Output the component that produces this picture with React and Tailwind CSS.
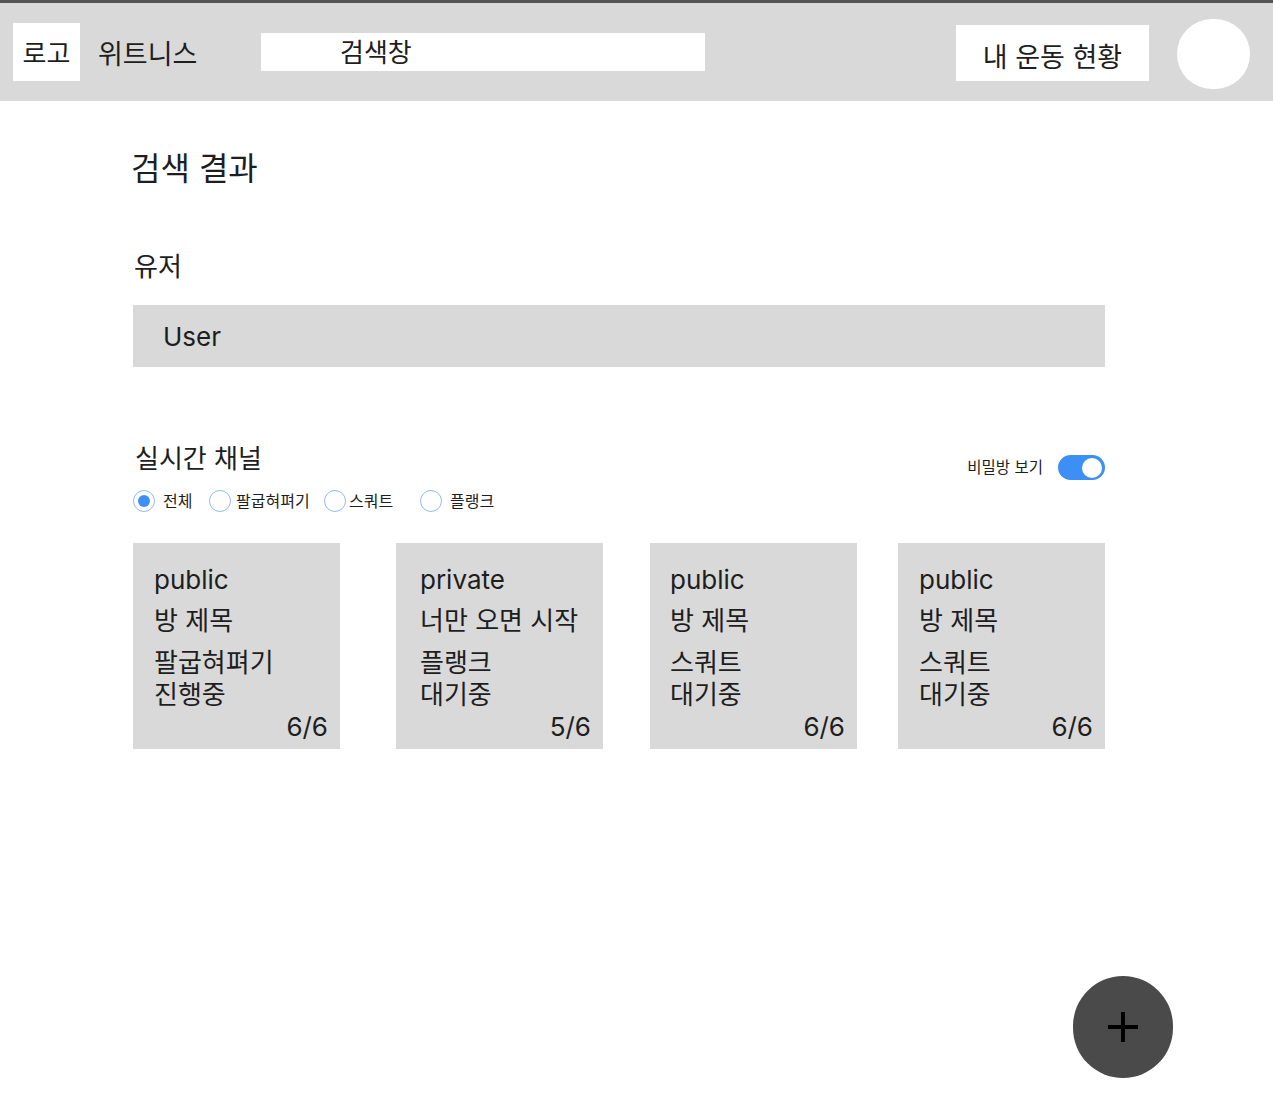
import React from "react";

const font = { fontFamily: '"Inter", "Noto Sans CJK KR", sans-serif' };

const rooms = [
  { type: "public", title: "방 제목", exercise: "팔굽혀펴기", status: "진행중", count: "6/6", ml: "", pl: "pl-[21px]" },
  { type: "private", title: "너만 오면 시작", exercise: "플랭크", status: "대기중", count: "5/6", ml: "ml-[56px]", pl: "pl-[24px]" },
  { type: "public", title: "방 제목", exercise: "스쿼트", status: "대기중", count: "6/6", ml: "ml-[47px]", pl: "pl-[20px]" },
  { type: "public", title: "방 제목", exercise: "스쿼트", status: "대기중", count: "6/6", ml: "ml-[41px]", pl: "pl-[21px]" },
];

const filters = [
  { label: "전체", checked: true, w: "w-[76px]", gap: "ml-[8px]" },
  { label: "팔굽혀펴기", checked: false, w: "w-[115px]", gap: "ml-[5px]" },
  { label: "스쿼트", checked: false, w: "w-[96px]", gap: "ml-[3px]" },
  { label: "플랭크", checked: false, w: "w-[90px]", gap: "ml-[8px]" },
];

const Radio = ({ checked }) => (
  <span className="w-[22px] h-[22px] rounded-full border border-[#8fbcf5] bg-white flex items-center justify-center shrink-0">
    {checked && <span className="w-[12px] h-[12px] rounded-full bg-[#3b8ff5]" />}
  </span>
);

const RoomCard = ({ room }) => (
  <div className={`w-[207px] h-[206px] bg-[#d9d9d9] pr-[12px] pt-[21px] flex flex-col text-[26px] leading-[32px] text-[#1e1e1e] ${room.pl} ${room.ml}`}>
    <div>{room.type}</div>
    <div className="mt-[9px]">{room.title}</div>
    <div className="mt-[10px]">{room.exercise}</div>
    <div>{room.status}</div>
    <div className="mt-auto mb-[6px] text-right">{room.count}</div>
  </div>
);

export default function App() {
  return (
    <div className="min-h-[1104px] bg-white text-[#1e1e1e] relative" style={font}>
      {/* header */}
      <header className="h-[101px] bg-[#d9d9d9] border-t-[3px] border-[#555555] flex items-start pl-[13px] pr-[23px]">
        <div className="mt-[20px] w-[67px] h-[58px] bg-white flex items-center justify-center pt-[3px] text-[26px]">로고</div>
        <div className="mt-[34px] w-[181px] pl-[18px] text-[27px] leading-[36px]">위트니스</div>
        <div className="mt-[30px] w-[444px] h-[38px] bg-white pl-[79px] text-[26px] leading-[40px]">검색창</div>
        <div className="ml-auto mt-[22px] w-[193px] h-[56px] bg-white flex items-center justify-center pt-[10px] text-[27px]">내 운동 현황</div>
        <div className="ml-[28px] mt-[16px] w-[73px] h-[70px] rounded-full bg-white" />
      </header>

      <main className="w-[972px] ml-[133px]">
        <h1 className="mt-[48px] text-[32px] leading-[40px] -ml-[2px]">검색 결과</h1>

        <h2 className="mt-[61px] text-[26px] leading-[34px] ml-[1px]">유저</h2>
        <div className="mt-[21px] h-[62px] bg-[#d9d9d9] pl-[30px] flex items-center text-[26px]">User</div>

        <div className="mt-[75px] flex items-end justify-between">
          <h2 className="text-[26px] leading-[34px] ml-[2px]">실시간 채널</h2>
          <div className="flex items-center mb-[-4px]">
            <span className="text-[15.5px]">비밀방 보기</span>
            <span className="ml-[15px] w-[47px] h-[25px] rounded-full bg-[#3b8ff5] flex items-center justify-end pr-[3px]">
              <span className="w-[20px] h-[20px] rounded-full bg-white" />
            </span>
          </div>
        </div>

        <div className="mt-[13px] flex items-center">
          {filters.map((f) => (
            <label key={f.label} className={`flex items-center text-[16px] ${f.w}`}>
              <Radio checked={f.checked} />
              <span className={f.gap}>{f.label}</span>
            </label>
          ))}
        </div>

        <div className="mt-[30px] flex">
          {rooms.map((r, i) => (
            <RoomCard key={i} room={r} />
          ))}
        </div>
      </main>

      <button className="absolute left-[1073px] top-[976px] w-[100px] h-[102px] rounded-full bg-[#4a4a4a] flex items-center justify-center">
        <svg width="34" height="34" viewBox="0 0 34 34">
          <path d="M17 2v30M2 17h30" stroke="#000" strokeWidth="4" />
        </svg>
      </button>
    </div>
  );
}
